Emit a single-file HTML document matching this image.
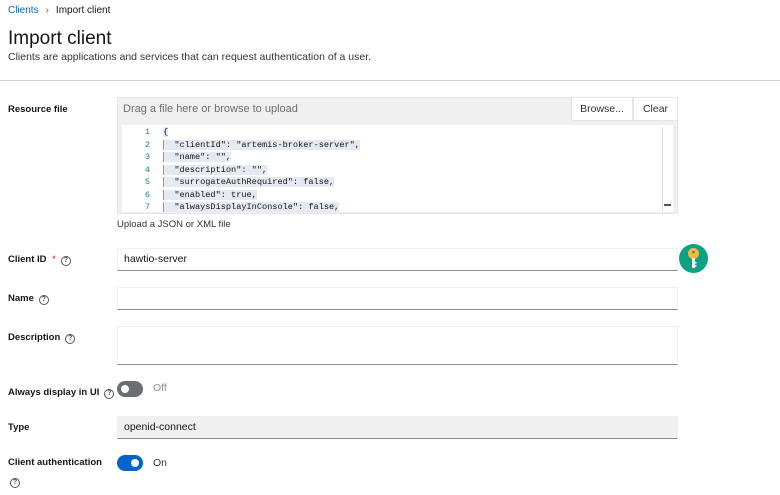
<!DOCTYPE html>
<html><head><style>
*{box-sizing:border-box;margin:0;padding:0}
body{width:780px;height:495px;background:#fff;font-family:"Liberation Sans",sans-serif;color:#151515;position:relative;overflow:hidden}
.a{position:absolute;white-space:nowrap}
.lbl{font-size:9.5px;font-weight:bold}
.q{display:inline-block;width:10px;height:10px;border:1px solid #555;border-radius:50%;font-size:7px;line-height:8px;text-align:center;font-weight:bold;color:#555;vertical-align:0px;margin-left:5px}
.inp{position:absolute;left:117px;width:561px;border:1px solid #f0f0f0;border-bottom:1px solid #8a8d90;background:#fff;font-size:10.5px;padding-left:6px}
.code{font-family:"Liberation Mono",monospace;font-size:8.6px;line-height:12.5px;color:#151515}
.tg{position:absolute;left:117px;width:26px;height:16px;border-radius:8px}
.tg i{position:absolute;top:4px;width:8px;height:8px;border-radius:50%;background:#fff}
</style></head><body>
<div class="a" style="left:8px;top:5px;font-size:10px"><span style="color:#0066cc">Clients</span><span style="color:#555;margin:0 7px">›</span>Import client</div>
<div class="a" style="left:8px;top:28px;font-size:19px">Import client</div>
<div class="a" style="left:8px;top:51px;font-size:10.5px;color:#333">Clients are applications and services that can request authentication of a user.</div>
<div class="a" style="left:0;top:80px;width:780px;height:1px;background:#d2d2d2"></div>

<div class="a lbl" style="left:8px;top:104px">Resource file</div>
<div class="a" style="left:117px;top:97px;width:561px;height:117px;background:#f0f0f0;border:1px solid #e6e6e6"></div>
<div class="a" style="left:123px;top:103px;font-size:11px;color:#6a6e73">Drag a file here or browse to upload</div>
<div class="a" style="left:571px;top:97px;width:62px;height:24px;background:#fff;border:1px solid #e6e6e6;font-size:10.5px;text-align:center;line-height:22px;color:#333">Browse...</div>
<div class="a" style="left:633px;top:97px;width:45px;height:24px;background:#fff;border:1px solid #e6e6e6;font-size:10.5px;text-align:center;line-height:22px;color:#333">Clear</div>
<div class="a" style="left:122px;top:125px;width:551px;height:87px;background:#fff;overflow:hidden"></div>
<div class="a" style="left:662px;top:127px;width:10px;height:84px;background:#fff;border-left:1px solid #e0e0e0"></div>
<div class="a" style="left:664px;top:204px;width:7px;height:1.5px;background:#555"></div>
<div class="a code" style="left:136px;top:126px;height:86px;overflow:hidden;color:#237893;text-align:right;width:14px">1<br>2<br>3<br>4<br>5<br>6<br>7</div>
<div class="a code" style="left:163px;top:126px;height:86px;overflow:hidden">
<span style="background:#e4e9f2">{ </span><br>
<span style="background:#e4e9f2;border-left:1px solid #999">&nbsp; "clientId": "artemis-broker-server", </span><br>
<span style="background:#e4e9f2;border-left:1px solid #999">&nbsp; "name": "", </span><br>
<span style="background:#e4e9f2;border-left:1px solid #999">&nbsp; "description": "", </span><br>
<span style="background:#e4e9f2;border-left:1px solid #999">&nbsp; "surrogateAuthRequired": false, </span><br>
<span style="background:#e4e9f2;border-left:1px solid #999">&nbsp; "enabled": true, </span><br>
<span style="background:#e4e9f2;border-left:1px solid #999">&nbsp; "alwaysDisplayInConsole": false, </span></div>
<div class="a" style="left:117px;top:219px;font-size:9.5px;color:#333">Upload a JSON or XML file</div>

<div class="a lbl" style="left:8px;top:254px">Client ID <span style="color:#c9190b;font-weight:normal;margin-left:3px">*</span><span class="q">?</span></div>
<div class="inp" style="top:248px;height:23px;line-height:21px">hawtio-server</div>
<div class="a" style="left:679px;top:244px;width:29px;height:29px;border-radius:50%;background:#0ea285"></div>
<svg class="a" style="left:679px;top:244px" width="29" height="29" viewBox="0 0 29 29"><circle cx="14.5" cy="9.5" r="5.5" fill="#f6b73c"/><circle cx="14.5" cy="8" r="1.3" fill="#0ea285"/><rect x="13" y="14" width="3" height="10" fill="#fff"/><rect x="16" y="18" width="1.5" height="1.5" fill="#fff"/><rect x="16" y="21" width="1.5" height="1.5" fill="#fff"/></svg>

<div class="a lbl" style="left:8px;top:293px">Name<span class="q">?</span></div>
<div class="inp" style="top:287px;height:23px"></div>
<div class="a lbl" style="left:8px;top:332px">Description<span class="q">?</span></div>
<div class="inp" style="top:326px;height:39px"></div>

<div class="a lbl" style="left:8px;top:387px">Always display in UI<span class="q">?</span></div>
<div class="tg" style="top:381px;background:#6a6e73"><i style="left:4px"></i></div>
<div class="a" style="left:153px;top:382px;font-size:10.5px;color:#8a8d90">Off</div>

<div class="a lbl" style="left:8px;top:422px">Type</div>
<div class="inp" style="top:416px;height:23px;line-height:21px;background:#f0f0f0;border-color:#f0f0f0;border-bottom-color:#8a8d90">openid-connect</div>

<div class="a lbl" style="left:8px;top:457px">Client authentication</div>
<div class="a" style="left:5px;top:471px"><span class="q">?</span></div>
<div class="tg" style="top:455px;background:#0066cc"><i style="left:14px"></i></div>
<div class="a" style="left:153px;top:457px;font-size:10.5px;color:#333">On</div>
</body></html>
